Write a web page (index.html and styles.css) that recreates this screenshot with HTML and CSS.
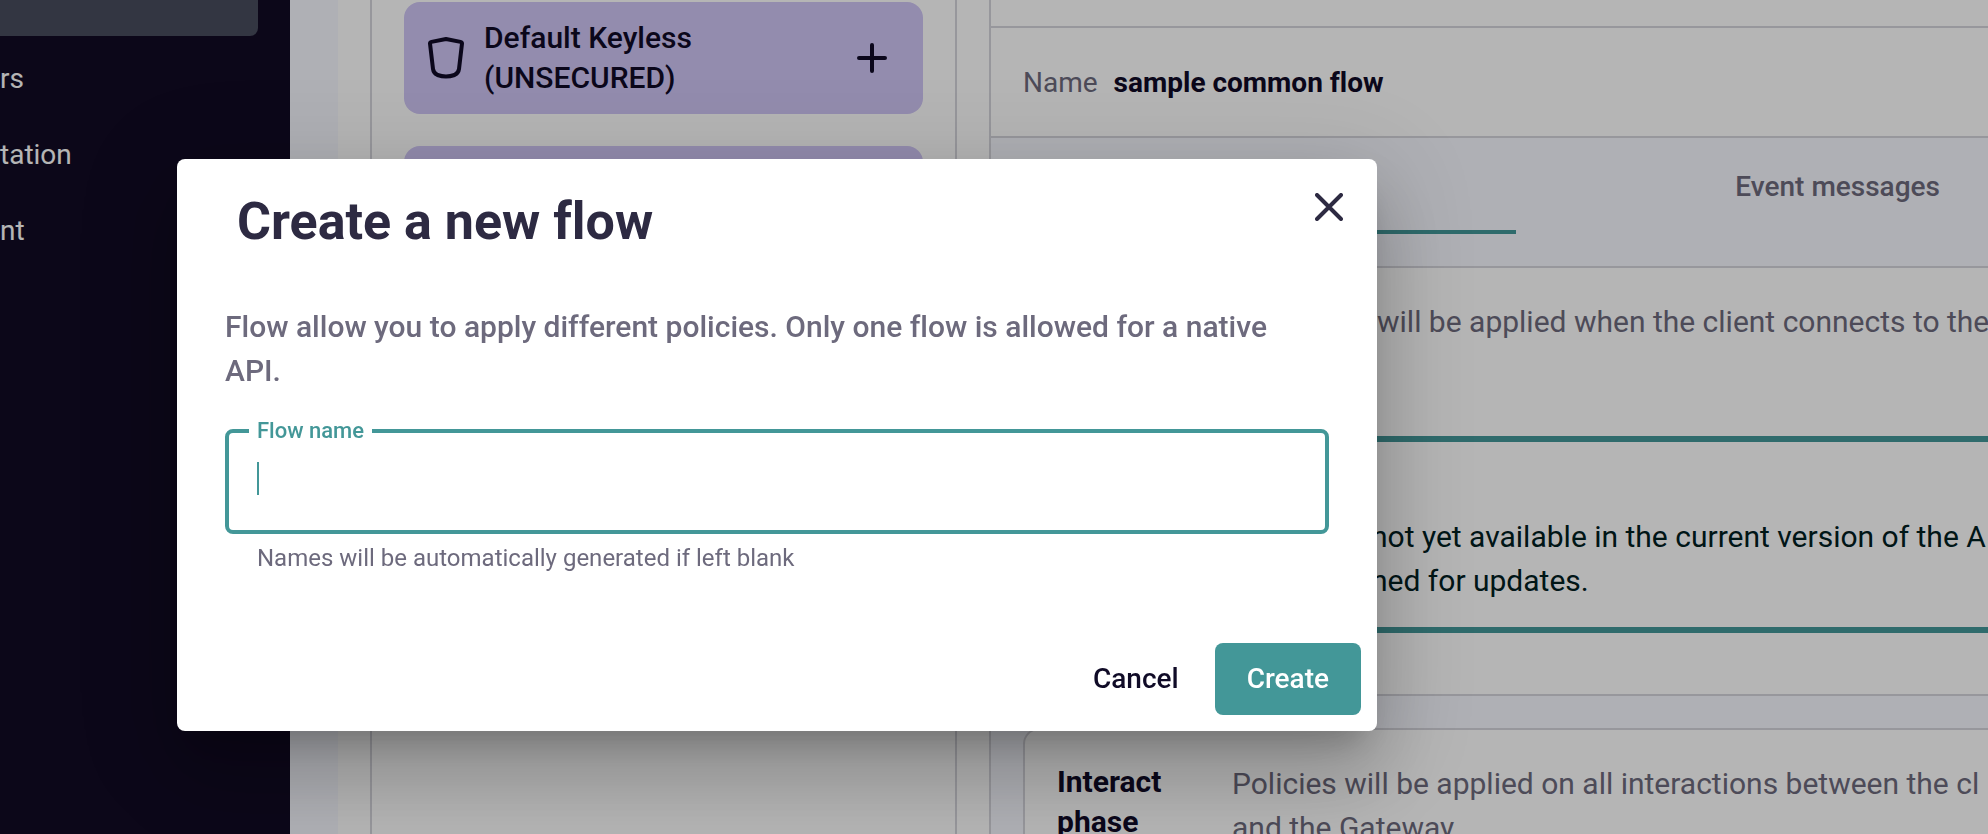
FILE: index.html
```html
<!DOCTYPE html>
<html lang="en">
<head>
<meta charset="utf-8">
<meta name="viewport" content="width=device-width, initial-scale=1">
<title>Create a new flow</title>
<link rel="stylesheet" href="styles.css">
</head>
<body>
<div class="app">
  <nav class="sidebar">
    <div class="nav-current"></div>
    <a class="nav-link" href="#">rs</a>
    <a class="nav-link" href="#">tation</a>
    <a class="nav-link" href="#">nt</a>
  </nav>
  <main class="content">
    <section class="plans">
      <div class="plan">
        <svg class="plan-icon" viewBox="0 0 36 42" aria-hidden="true"><path d="M2 6.5Q2 5.200 3.500 4.900L18 2L32.500 4.900Q34 5.200 34 6.500L31 32Q30.500 36 26.500 38Q18 41 9.500 38Q5.500 36 5 32Z"/></svg>
        <span class="plan-name">Default Keyless (UNSECURED)</span>
        <button class="plan-add" type="button" aria-label="Add flow"><svg viewBox="0 0 30 30" aria-hidden="true"><path d="M15 2V28M2 15H28"/></svg></button>
      </div>
      <div class="plan"></div>
    </section>
    <section class="flow">
      <div class="flow-top"></div>
      <div class="flow-head"><span class="muted">Name</span><strong>sample common flow</strong></div>
      <div class="tabs">
        <div class="tab-active"></div>
        <button class="tab" type="button">Event messages</button>
      </div>
      <div class="phase-connect">
        <p class="phase-note muted">will be applied when the client connects to the</p>
        <div class="banner">
          <p>not yet available in the current version of the A</p>
          <p>ned for updates.</p>
        </div>
      </div>
      <div class="phases">
        <div class="phase">
          <h2 class="phase-title">Interact phase</h2>
          <div class="phase-text muted">
            <p>Policies will be applied on all interactions between the cl</p>
            <p>and the Gateway.</p>
          </div>
        </div>
      </div>
    </section>
  </main>
</div>
<div class="backdrop"></div>
<form class="dialog" role="dialog" aria-modal="true" aria-labelledby="dialog-title">
  <header class="dialog-head">
    <h1 class="dialog-title" id="dialog-title">Create a new flow</h1>
    <button class="close" type="button" aria-label="Close"><svg viewBox="0 0 28 28" aria-hidden="true"><path d="M2 2L26 26M26 2L2 26"/></svg></button>
  </header>
  <div class="dialog-body">
    <p class="dialog-text">Flow allow you to apply different policies. Only one flow is allowed for a native API.</p>
    <fieldset class="field">
      <legend class="field-legend"><label for="flow-name">Flow name</label></legend>
      <input class="field-input" id="flow-name" type="text" aria-describedby="flow-hint">
    </fieldset>
    <p class="hint" id="flow-hint">Names will be automatically generated if left blank</p>
  </div>
  <footer class="dialog-actions">
    <button class="btn" type="button">Cancel</button>
    <button class="btn btn-primary" type="submit">Create</button>
  </footer>
</form>
</body>
</html>
```
FILE: styles.css
```css
:root {
  --ink: #100b27;
  --muted: #6d6a7d;
  --teal: #439798;
  --line: #d5d5dc;
  --wash: #f7f8ff;
  --night: #110b24;
}
* { box-sizing: border-box; }
body {
  margin: 0;
  overflow: hidden;
  background: #fff;
  color: var(--ink);
  font: 400 30px/44px Roboto, "Liberation Sans", sans-serif;
  font-variant-ligatures: none;
}
p, h1, h2 { margin: 0; }
button { font: inherit; color: inherit; border: 0; padding: 0; background: none; }
svg { display: block; fill: none; stroke: currentColor; stroke-linecap: round; stroke-linejoin: round; }
.muted { color: var(--muted); }

.app { display: flex; height: 100vh; overflow: hidden; }
.sidebar {
  flex: 0 0 290px;
  display: flex;
  flex-direction: column;
  background: var(--night);
}
.nav-current {
  height: 36px;
  margin: 0 32px 4px 0;
  border-radius: 0 0 8px 0;
  background: #494c5d;
}
.nav-link {
  height: 76px;
  font-size: 28px;
  line-height: 78px;
  color: #fff;
  text-decoration: none;
}
.content {
  flex: 1;
  min-width: 0;
  display: flex;
  gap: 32px;
  padding-left: 32px;
  border-left: 48px solid var(--wash);
}
.plans {
  flex: 0 0 587px;
  display: flex;
  flex-direction: column;
  gap: 32px;
  padding: 2px 32px;
  border: solid var(--line);
  border-width: 0 2px;
}
.plan {
  display: flex;
  align-items: center;
  gap: 20px;
  min-height: 112px;
  padding: 16px 36px 16px 24px;
  border-radius: 16px;
  background: #cfc5f5;
  font-weight: 500;
  line-height: 40px;
}
.plan-icon { flex: none; width: 36px; height: 42px; stroke-width: 4; }
.plan-name { flex: 1; padding-right: 120px; }
.plan-add svg { width: 30px; height: 30px; stroke-width: 4; }

.flow {
  flex: 1;
  min-width: 0;
  border-left: 2px solid var(--line);
  white-space: nowrap;
}
.flow-top { height: 28px; border-bottom: 2px solid var(--line); }
.flow-head {
  display: flex;
  align-items: center;
  gap: 16px;
  height: 110px;
  padding: 2px 32px 0;
  border-bottom: 2px solid var(--line);
  font-size: 28px;
}
.flow-head strong { font-weight: 700; }
.tabs {
  display: flex;
  justify-content: space-between;
  height: 130px;
  padding: 0 48px 32px 0;
  border-bottom: 2px solid var(--line);
  background: var(--wash);
}
.tab-active { flex: 0 0 525px; border-bottom: 4px solid var(--teal); }
.tab { padding-top: 2px; font-size: 28px; font-weight: 500; color: var(--muted); }
.phase-connect { height: 428px; padding-top: 32px; border-bottom: 2px solid var(--line); }
.phase-note { padding-left: 386px; }
.banner {
  height: 197px;
  margin-top: 92px;
  padding: 73px 0 0 380px;
  border: solid var(--teal);
  border-width: 6px 0;
  color: #00201f;
}
.phases { padding: 32px 0 0 32px; background: var(--wash); }
.phase {
  display: flex;
  height: 200px;
  padding: 32px;
  border: solid var(--line);
  border-width: 2px 0 0 2px;
  border-radius: 16px 0 0 0;
  background: #fff;
}
.phase-title { flex: 0 0 175px; padding-right: 40px; font-size: 30px; line-height: 40px; font-weight: 700; white-space: normal; }

.backdrop { position: fixed; inset: 0; background: rgba(0, 0, 0, .29); }
.dialog {
  position: absolute;
  top: 159px;
  left: 177px;
  width: 1200px;
  max-width: 100%;
  border-radius: 8px;
  background: #fff;
  box-shadow: 0 22px 30px -14px rgba(0, 0, 0, .2), 0 48px 76px 6px rgba(0, 0, 0, .14), 0 18px 92px 16px rgba(0, 0, 0, .12);
}
.dialog-head {
  display: flex;
  align-items: flex-start;
  justify-content: space-between;
  padding: 32px 32px 0 60px;
}
.dialog-title { font-size: 52px; line-height: 62px; font-weight: 700; color: #2d2a42; }
.close { padding: 2px; color: #2d2a42; }
.close svg { width: 28px; height: 28px; stroke-width: 4; }
.dialog-body { padding: 52px 48px 0; color: var(--muted); }
.dialog-text { font-weight: 500; }
.field {
  min-width: 0;
  margin: 25px 0 0;
  padding: 0 28px;
  border: 4px solid var(--teal);
  border-radius: 8px;
}
.field-legend {
  margin-left: -8px;
  padding: 0 8px;
  font-size: 22px;
  line-height: 26px;
  font-weight: 500;
  color: var(--teal);
}
.field-legend label { display: block; }
.field-input {
  display: block;
  width: 100%;
  height: 86px;
  padding: 0;
  border: 0;
  outline: 0;
  font: inherit;
  color: var(--ink);
  background: linear-gradient(var(--teal), var(--teal)) 0 18px / 2px 33px no-repeat;
}
.hint { padding: 4px 32px 0; font-size: 24px; line-height: 40px; }
.dialog-actions {
  display: flex;
  justify-content: flex-end;
  gap: 4px;
  padding: 65px 16px 16px;
}
.btn { height: 72px; padding: 0 32px; border-radius: 8px; font-size: 28px; font-weight: 500; }
.btn-primary { background: var(--teal); color: #fff; }
```
